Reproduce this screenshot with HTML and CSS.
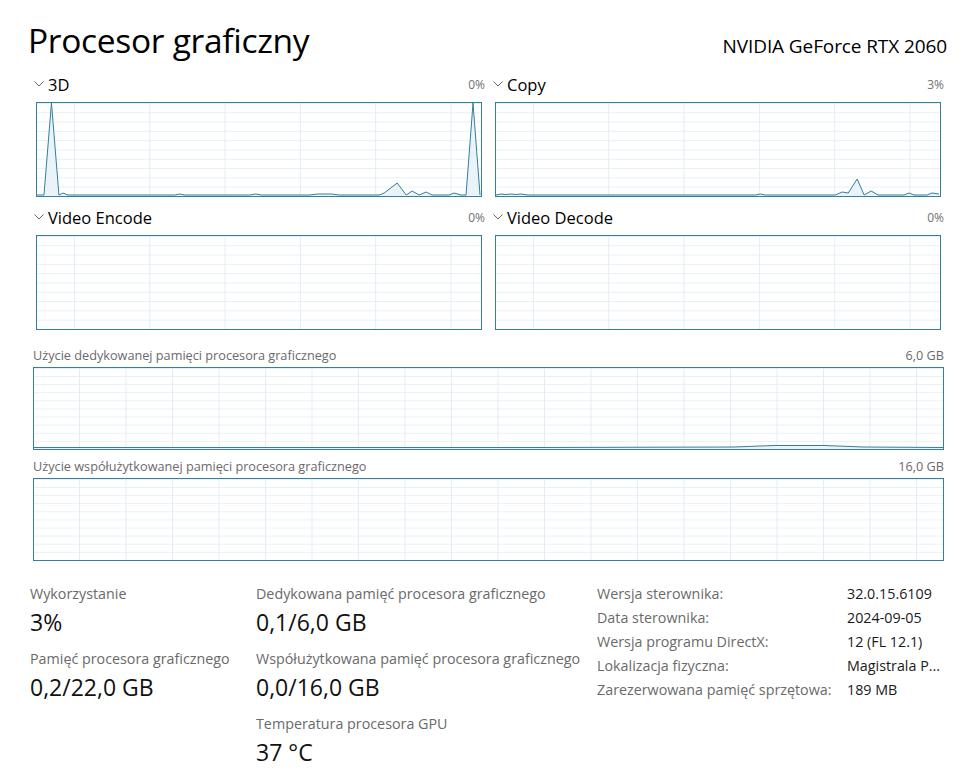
FILE: index.html
```html
<!DOCTYPE html>
<html lang="pl">
<head>
<meta charset="utf-8">
<title>Procesor graficzny</title>
<link rel="stylesheet" href="styles.css">
</head>
<body>
<div class="page">
  <header class="head">
    <h1 class="title">Procesor graficzny</h1>
    <div class="model">NVIDIA GeForce RTX 2060</div>
  </header>

  <div class="engines">
    <section class="engine">
      <div class="elabel">
        <span class="ename"><svg class="chev" viewBox="0 0 10 6"><polyline points="0.5,0.5 5,5 9.5,0.5"/></svg>3D</span>
        <span class="pct">0%</span>
      </div>
      <div class="chart small">
        <svg viewBox="0 0 445 93" preserveAspectRatio="none">
          <polygon class="area" points="0,93 7,92 14.5,0 22,92 26,90 31,92 138,92 143,91 148,92 213,92 219,91 225,92 273,92 281,91 295,91 303,92 343,92 348,90 361,80 370,92 376,88 383,92 390,89 396,92 413,92 418,90 425,92 430,92 437,0 444,92 445,93"/>
          <polyline class="line" points="0,92 7,92 14.5,0 22,92 26,90 31,92 138,92 143,91 148,92 213,92 219,91 225,92 273,92 281,91 295,91 303,92 343,92 348,90 361,80 370,92 376,88 383,92 390,89 396,92 413,92 418,90 425,92 430,92 437,0 444,92"/>
        </svg>
      </div>
    </section>
    <section class="engine">
      <div class="elabel">
        <span class="ename"><svg class="chev" viewBox="0 0 10 6"><polyline points="0.5,0.5 5,5 9.5,0.5"/></svg>Copy</span>
        <span class="pct">3%</span>
      </div>
      <div class="chart small">
        <svg viewBox="0 0 445 93" preserveAspectRatio="none">
          <polygon class="area" points="0,93 0,92 5,91 10,91.5 15,91 20,91.5 25,91 32,92 260,92 265,91 270,92 340,92 347,89 353,90 362,76 369,92 376,88 383,92 391,92 409,92 414,90 419,92 432,92 437,90 444,91 445,93"/>
          <polyline class="line" points="0,92 5,91 10,91.5 15,91 20,91.5 25,91 32,92 260,92 265,91 270,92 340,92 347,89 353,90 362,76 369,92 376,88 383,92 391,92 409,92 414,90 419,92 432,92 437,90 444,91"/>
        </svg>
      </div>
    </section>
    <section class="engine">
      <div class="elabel">
        <span class="ename"><svg class="chev" viewBox="0 0 10 6"><polyline points="0.5,0.5 5,5 9.5,0.5"/></svg>Video Encode</span>
        <span class="pct">0%</span>
      </div>
      <div class="chart small"></div>
    </section>
    <section class="engine">
      <div class="elabel">
        <span class="ename"><svg class="chev" viewBox="0 0 10 6"><polyline points="0.5,0.5 5,5 9.5,0.5"/></svg>Video Decode</span>
        <span class="pct">0%</span>
      </div>
      <div class="chart small"></div>
    </section>
  </div>

  <section class="mem first">
    <div class="mlabel"><span>Użycie dedykowanej pamięci procesora graficznego</span><span>6,0 GB</span></div>
    <div class="chart wide">
      <svg viewBox="0 0 909 81" preserveAspectRatio="none">
        <polygon class="area" points="0,81 0,79.5 500,79.5 700,79 740,77.5 790,77.5 830,79 909,79.5 909,81"/>
        <polyline class="line" points="0,79.5 500,79.5 700,79 740,77.5 790,77.5 830,79 909,79.5"/>
      </svg>
    </div>
  </section>

  <section class="mem">
    <div class="mlabel"><span>Użycie współużytkowanej pamięci procesora graficznego</span><span>16,0 GB</span></div>
    <div class="chart wide"></div>
  </section>

  <div class="stats">
    <div class="scol c1">
      <div class="stat"><div class="slabel">Wykorzystanie</div><div class="sval">3%</div></div>
      <div class="stat"><div class="slabel">Pamięć procesora graficznego</div><div class="sval">0,2/22,0 GB</div></div>
    </div>
    <div class="scol c2">
      <div class="stat"><div class="slabel">Dedykowana pamięć procesora graficznego</div><div class="sval">0,1/6,0 GB</div></div>
      <div class="stat"><div class="slabel">Współużytkowana pamięć procesora graficznego</div><div class="sval">0,0/16,0 GB</div></div>
      <div class="stat"><div class="slabel">Temperatura procesora GPU</div><div class="sval">37 °C</div></div>
    </div>
    <div class="info">
      <div class="ik">Wersja sterownika:</div><div class="iv">32.0.15.6109</div>
      <div class="ik">Data sterownika:</div><div class="iv">2024-09-05</div>
      <div class="ik">Wersja programu DirectX:</div><div class="iv">12 (FL 12.1)</div>
      <div class="ik">Lokalizacja fizyczna:</div><div class="iv">Magistrala P...</div>
      <div class="ik">Zarezerwowana pamięć sprzętowa:</div><div class="iv">189 MB</div>
    </div>
  </div>
</div>
</body>
</html>
```

FILE: styles.css
```css
* { box-sizing: border-box; }
html, body { margin: 0; padding: 0; background: #fff; }
body {
  font-family: "Segoe UI", "Open Sans", "Noto Sans", sans-serif;
  color: #000;
}
.page {
  width: 977px;
  height: 778px;
  padding: 18px 33px 0 33px;
  overflow: hidden;
}
.head {
  display: flex;
  justify-content: space-between;
  align-items: baseline;
  margin: 0 -3px 0 -5px;
  height: 53px;
}
.title {
  margin: 0;
  font-weight: 400;
  font-size: 33.5px;
  line-height: 44px;
  letter-spacing: -0.3px;
}
.model {
  font-size: 19px;
  letter-spacing: -0.1px;
}
.engines {
  display: grid;
  grid-template-columns: 452px 452px;
  column-gap: 7px;
  row-gap: 7px;
}
.elabel {
  height: 26px;
  display: flex;
  justify-content: space-between;
  align-items: center;
  margin-bottom: 5px;
}
.ename {
  display: flex;
  align-items: center;
  font-size: 16.5px;
}
.chev {
  width: 10px;
  height: 6px;
  margin: 0 4px 0 1px;
  fill: none;
  stroke: #666;
  stroke-width: 1;
}
.pct {
  font-size: 12px;
  color: #707070;
}
.chart {
  border: 1px solid #337f9d;
  background-color: #fff;
  position: relative;
}
.chart svg {
  display: block;
  width: 100%;
  height: 100%;
  overflow: visible;
}
.small {
  height: 95px;
  margin: 0 3px;
  background-image:
    linear-gradient(to right, #e3edf3 1px, transparent 1px),
    linear-gradient(to bottom, #e6f0f5 1px, transparent 1px);
  background-size: 75.3px 100%, 100% 9.3px;
  background-position: 37px 0, 0 0;
}
.wide {
  height: 83px;
  background-image:
    linear-gradient(to right, #e3edf3 1px, transparent 1px),
    linear-gradient(to bottom, #e6f0f5 1px, transparent 1px);
  background-size: 46.5px 100%, 100% 8.1px;
  background-position: 45px 0, 0 0;
}
.area { fill: #e9f3f8; stroke: none; }
.line { fill: none; stroke: #337f9d; stroke-width: 1; vector-effect: non-scaling-stroke; stroke-linejoin: round; }
.mem.first { margin-top: 17px; }
.mem { margin-top: 8px; }
.mlabel {
  height: 16px;
  display: flex;
  justify-content: space-between;
  align-items: center;
  font-size: 12.7px;
  color: #6a6a6a;
  margin-bottom: 4px;
}
.stats {
  display: flex;
  margin: 23px 0 0 -3px;
}
.scol { display: flex; flex-direction: column; gap: 8px; }
.c1 { width: 226px; }
.c2 { width: 341px; }
.slabel {
  font-size: 14.3px;
  color: #6a6a6a;
  line-height: 20px;
}
.sval {
  font-size: 23px;
  line-height: 37px;
  color: #111;
}
.info {
  display: grid;
  grid-template-columns: 250px auto;
  grid-auto-rows: 24px;
  font-size: 14.3px;
  line-height: 20px;
  margin-top: 0;
}
.ik { color: #6a6a6a; }
.iv { color: #1a1a1a; }
```
